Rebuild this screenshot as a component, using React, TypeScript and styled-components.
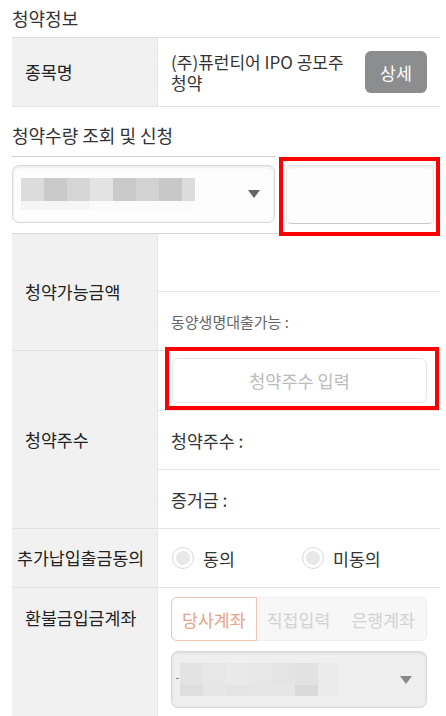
import React, {FC} from 'react';
import styled, {createGlobalStyle} from "styled-components";

const GlobalStyle = createGlobalStyle`
  html, body {
    margin: 0;
    padding: 0;
    background: #FFFFFF;
  }
  * {
    box-sizing: border-box;
  }
`
const Page = styled.div`
  width: 446px;
  padding: 0 6px 0 12px;
  font-family: "Noto Sans CJK KR", "Noto Sans", sans-serif;
  color: #222222;
  overflow: hidden;
`
const Title = styled.div<{top: number, bottom: number}>`
  padding-top: ${props => props.top}px;
  padding-bottom: ${props => props.bottom}px;
  font-size: 18px;
  line-height: 21px;
  color: #333333;
`
const Table = styled.div<{line: string}>`
  border-top: 1px solid ${props => props.line};
`
const Row = styled.div`
  display: flex;
  border-bottom: 1px solid #E3E3E3;
`
const Label = styled.div<{align: string, padLeft: number, padTop: number}>`
  display: flex;
  align-items: ${props => props.align};
  width: 146px;
  flex-shrink: 0;
  padding-left: ${props => props.padLeft}px;
  padding-top: ${props => props.padTop}px;
  background: #F1F1F1;
  border-right: 1px solid #E6E6E6;
  font-size: 17.3px;
  line-height: 22px;
  white-space: nowrap;
`
const Values = styled.div`
  flex: 1;
  display: flex;
  flex-direction: column;
  min-width: 0;
`
const Cell = styled.div<{h: number, last?: boolean, top?: boolean}>`
  display: flex;
  align-items: ${props => props.top ? 'flex-start' : 'center'};
  height: ${props => props.h + (props.last ? 0 : 1)}px;
  padding-left: ${props => props.top ? 7 : 13}px;
  border-bottom: ${props => props.last ? 'none' : '1px solid #E6E6E6'};
`
const NameCell = styled.div`
  display: flex;
  align-items: center;
  height: 68px;
  padding: 0 13px;
  flex: 1;
`
const Name = styled.div`
  flex: 1;
  margin-right: 10px;
  font-size: 17px;
  line-height: 21px;
  color: #333333;
  word-break: keep-all;
`
const DetailButton = styled.button`
  width: 62px;
  height: 42px;
  border: none;
  border-radius: 6px;
  background: #8B8D8F;
  color: #FFFFFF;
  font-family: inherit;
  font-size: 17.3px;
`
const QueryRow = styled.div`
  display: flex;
  align-items: flex-start;
`
const SelectWrap = styled.div`
  width: 265px;
  border-top: 1px solid #CFCFCF;
  padding: 8px 1px 10px 0;
`
const Select = styled.div<{h: number, bg: string}>`
  display: flex;
  align-items: center;
  justify-content: space-between;
  height: ${props => props.h}px;
  padding: 0 14px 0 8px;
  background: ${props => props.bg};
  border: 1px solid #D8D8D8;
  border-radius: 7px;
  box-shadow: inset 0 1px 3px rgba(0, 0, 0, 0.10);
`
const Arrow = styled.div<{color: string}>`
  width: 0;
  height: 0;
  border-left: 6px solid transparent;
  border-right: 6px solid transparent;
  border-top: 8px solid ${props => props.color};
`
const RedBox = styled.div<{w: number, h: number, mt: number, mb: number, ml: number}>`
  width: ${props => props.w}px;
  height: ${props => props.h}px;
  margin: ${props => props.mt}px 0 ${props => props.mb}px ${props => props.ml}px;
  border: 4px solid #FF0000;
  flex-shrink: 0;
`
const AmountInput = styled.div`
  width: 148px;
  height: 59px;
  margin: 4px 0 0 3px;
  border: 1px solid #E4E4E4;
  border-bottom-color: #C8C8C8;
  border-radius: 5px;
  background: #FDFDFD;
  box-shadow: inset 0 2px 2px rgba(0, 0, 0, 0.06);
`
const SharesInput = styled.div`
  display: flex;
  align-items: center;
  justify-content: center;
  width: 255px;
  height: 45px;
  margin: 7px 0 0 3px;
  border: 1px solid #E6E6E6;
  border-radius: 6px;
  background: #FFFFFF;
  font-size: 17.5px;
  color: #BBBBBB;
`
const SmallText = styled.span`
  font-size: 15px;
  color: #666666;
`
const Text = styled.span`
  font-size: 17.3px;
  color: #333333;
`
const RadioGroup = styled.div`
  display: flex;
  align-items: center;
  height: 58px;
  padding-left: 14px;
`
const RadioOption = styled.label<{w: number}>`
  display: flex;
  align-items: center;
  gap: 9px;
  width: ${props => props.w}px;
  font-size: 17.3px;
  color: #333333;
`
const RadioCircle = styled.span`
  width: 22px;
  height: 22px;
  border-radius: 50%;
  border: 1px solid #DADADA;
  background: radial-gradient(circle, #E8E8E8 0 6.5px, #FFFFFF 7.5px);
`
const RefundCell = styled.div`
  display: flex;
  flex-direction: column;
  gap: 10px;
  padding: 9px 13px 10px 13px;
`
const Tabs = styled.div`
  display: flex;
  height: 44px;
  background: #F7F7F7;
  border: 1px solid #EEEEEE;
  border-radius: 6px;
`
const Tab = styled.div<{active?: boolean}>`
  flex: 1;
  display: flex;
  align-items: center;
  justify-content: center;
  margin: -1px 0 -1px -1px;
  font-size: 17.3px;
  color: ${props => props.active ? '#E9A388' : '#D2D2D2'};
  background: ${props => props.active ? '#FFFFFF' : 'transparent'};
  border: 1px solid ${props => props.active ? '#F1C6B2' : 'transparent'};
  border-radius: ${props => props.active ? '6px 0 0 6px' : '0'};
`

const blocks1 = ['#DCDCDC', '#CACACA', '#D6D6D6', '#E3E3E3', '#C9C9C9', '#D2D2D2', '#C8C8C8', '#DCDCDC']
const blocks2top = ['#E3E3E3', '#E7E7E7', '#E9E9E9', '#E7E7E7', '#E4E4E4', '#E2E2E2', '#EBEBEB']
const blocks2bottom = ['#DEDEDE', '#E6E6E6', '#E4E4E4', '#E6E6E6', '#E6E6E6', '#DADADA', '#EBEBEB']

const Mosaic1: FC = () => (
    <svg width="174" height="33" viewBox="0 0 174 33">
        {blocks1.map((c, i) => (
            <rect key={i} x={i * 23} y="0" width={i === 7 ? 13 : 23} height="23" fill={c}/>
        ))}
        <rect x="0" y="23" width="69" height="9" fill="#F6F6F6"/>
        <rect x="69" y="23" width="105" height="9" fill="#FBFBFB"/>
    </svg>
)

const Mosaic2: FC = () => (
    <svg width="162" height="33" viewBox="0 0 162 33" style={{marginLeft: '-4px'}}>
        <rect x="0" y="15" width="3" height="1" fill="#888888"/>
        {blocks2top.map((c, i) => (
            <rect key={i} x={4 + i * 23} y="0" width={i === 6 ? 20 : 23} height="22" fill={c}/>
        ))}
        {blocks2bottom.map((c, i) => (
            <rect key={'b' + i} x={4 + i * 23} y="22" width={i === 6 ? 20 : 23} height="11" fill={c}/>
        ))}
    </svg>
)

const App: FC = () => {
    return (
        <Page>
            <GlobalStyle/>
            <Title top={8} bottom={8}>청약정보</Title>
            <Table line="#DDDDDD">
                <Row>
                    <Label align="center" padLeft={13} padTop={0}>종목명</Label>
                    <NameCell>
                        <Name>(주)퓨런티어 IPO 공모주 청약</Name>
                        <DetailButton>상세</DetailButton>
                    </NameCell>
                </Row>
            </Table>
            <Title top={18} bottom={10}>청약수량 조회 및 신청</Title>
            <QueryRow>
                <SelectWrap>
                    <Select h={58} bg="#FDFDFD">
                        <Mosaic1/>
                        <Arrow color="#666666"/>
                    </Select>
                </SelectWrap>
                <RedBox w={161} h={79} mt={1} mb={-3} ml={3}>
                    <AmountInput/>
                </RedBox>
            </QueryRow>
            <Table line="#D8D8D8">
                <Row>
                    <Label align="center" padLeft={13} padTop={0}>청약가능금액</Label>
                    <Values>
                        <Cell h={57}/>
                        <Cell h={58} last><SmallText>동양생명대출가능 :</SmallText></Cell>
                    </Values>
                </Row>
                <Row>
                    <Label align="center" padLeft={13} padTop={0}>청약주수</Label>
                    <Values>
                        <Cell h={59} top>
                            <RedBox w={274} h={63} mt={-4} mb={0} ml={0}>
                                <SharesInput>청약주수 입력</SharesInput>
                            </RedBox>
                        </Cell>
                        <Cell h={58}><Text>청약주수 :</Text></Cell>
                        <Cell h={58} last><Text>증거금 :</Text></Cell>
                    </Values>
                </Row>
                <Row>
                    <Label align="center" padLeft={5} padTop={0}>추가납입출금동의</Label>
                    <Values>
                        <RadioGroup>
                            <RadioOption w={130}><RadioCircle/>동의</RadioOption>
                            <RadioOption w={120}><RadioCircle/>미동의</RadioOption>
                        </RadioGroup>
                    </Values>
                </Row>
                <Row>
                    <Label align="flex-start" padLeft={13} padTop={19}>환불금입금계좌</Label>
                    <Values>
                        <RefundCell>
                            <Tabs>
                                <Tab active>당사계좌</Tab>
                                <Tab>직접입력</Tab>
                                <Tab>은행계좌</Tab>
                            </Tabs>
                            <Select h={57} bg="#EFEFEF">
                                <Mosaic2/>
                                <Arrow color="#8A8A8A"/>
                            </Select>
                        </RefundCell>
                    </Values>
                </Row>
            </Table>
        </Page>
    );
};

export default App;
